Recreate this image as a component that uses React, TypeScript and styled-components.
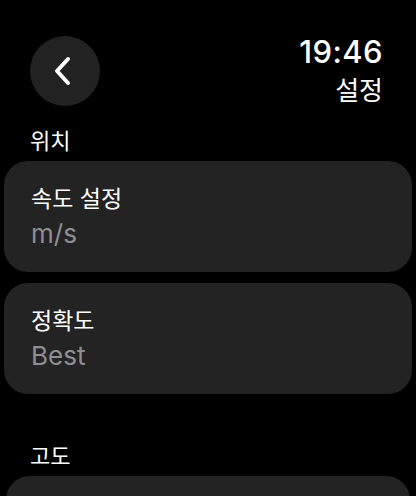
import React from 'react';
import styled, { createGlobalStyle } from 'styled-components';

const GlobalStyle = createGlobalStyle`
  html, body {
    margin: 0;
    padding: 0;
    background: #000;
  }
  body {
    font-family: Inter, "Noto Sans CJK KR", sans-serif;
    color: #fff;
    -webkit-font-smoothing: antialiased;
  }
`;

const Screen = styled.div`
  width: 416px;
  height: 496px;
  overflow: hidden;
  background: #000;
  display: flex;
  flex-direction: column;
`;

const Header = styled.header`
  display: flex;
  justify-content: space-between;
  align-items: flex-start;
  padding: 36px 33px 0 30px;
`;

const BackButton = styled.button`
  width: 70px;
  height: 70px;
  border-radius: 50%;
  border: none;
  background: #222222;
  display: flex;
  align-items: center;
  justify-content: center;
  padding: 0 4px 0 0;
  cursor: pointer;
`;

const TitleBlock = styled.div`
  display: flex;
  flex-direction: column;
  align-items: flex-end;
`;

const Clock = styled.div`
  font-size: 31px;
  font-weight: 500;
  line-height: 32px;
  letter-spacing: 0.4px;
`;

const Title = styled.div`
  font-size: 26px;
  font-weight: 400;
  line-height: 34px;
  margin-top: 6px;
`;

const SectionLabel = styled.div<{ $top: number }>`
  font-size: 22px;
  font-weight: 400;
  line-height: 28px;
  padding-left: 30px;
  margin-top: ${(p) => p.$top}px;
  margin-bottom: 6px;
`;

const CardList = styled.div`
  display: flex;
  flex-direction: column;
  gap: 11px;
  padding: 0 4px;
`;

const Card = styled.div<{ $inset?: number }>`
  background: #232323;
  border-radius: 24px;
  height: 111px;
  margin: 0 ${(p) => p.$inset ?? 0}px;
  padding: 0 27px;
  display: flex;
  flex-direction: column;
  justify-content: center;
  box-sizing: border-box;
`;

const CardTitle = styled.div`
  font-size: 23px;
  font-weight: 400;
  line-height: 30px;
`;

const CardValue = styled.div`
  font-size: 26px;
  font-weight: 400;
  line-height: 32px;
  color: #8e8e93;
  margin-top: 4px;
`;

const ChevronLeft = () => (
  <svg width="22" height="32" viewBox="0 0 22 32" fill="none">
    <path
      d="M16 4 L5 16 L16 28"
      stroke="#fff"
      strokeWidth="4"
      strokeLinecap="round"
      strokeLinejoin="round"
    />
  </svg>
);

const items = [
  { title: '속도 설정', value: 'm/s' },
  { title: '정확도', value: 'Best' },
];

export default function App() {
  return (
    <>
      <GlobalStyle />
      <Screen>
        <Header>
          <BackButton aria-label="뒤로">
            <ChevronLeft />
          </BackButton>
          <TitleBlock>
            <Clock>19:46</Clock>
            <Title>설정</Title>
          </TitleBlock>
        </Header>

        <SectionLabel $top={19}>위치</SectionLabel>
        <CardList>
          {items.map((it) => (
            <Card key={it.title}>
              <CardTitle>{it.title}</CardTitle>
              <CardValue>{it.value}</CardValue>
            </Card>
          ))}
        </CardList>

        <SectionLabel $top={48}>고도</SectionLabel>
        <CardList>
          <Card $inset={2} />
        </CardList>
      </Screen>
    </>
  );
}
